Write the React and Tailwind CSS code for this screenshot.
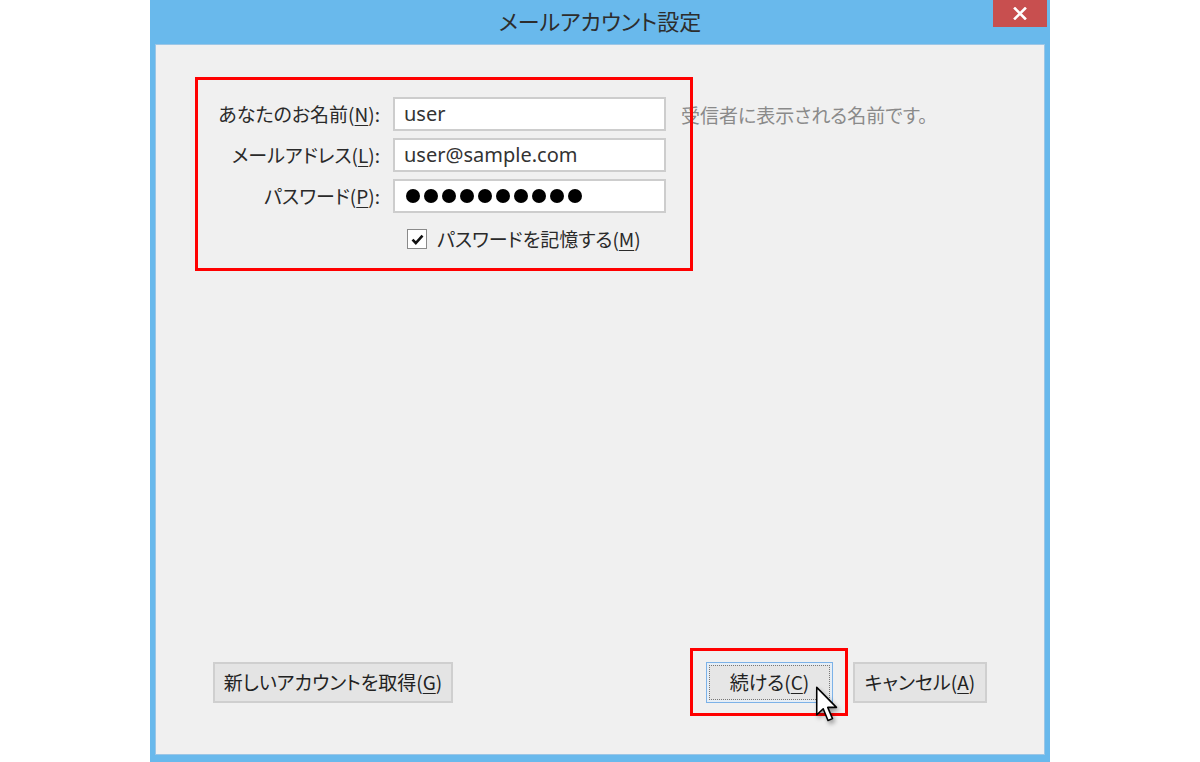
import React from 'react'

const jp = "font-['Noto_Sans_CJK_JP',sans-serif] [font-feature-settings:'palt']"
const latin = "font-['Noto_Sans','Noto_Sans_CJK_JP',sans-serif]"

function Key({ k }) {
  return <span className="underline underline-offset-[3px] decoration-1">{k}</span>
}

function Field({ label, k, children }) {
  return (
    <div className="flex items-center h-[34px]">
      <div className={`w-[182px] text-right text-[19px] text-[#2a2a2a] whitespace-nowrap ${jp}`}>
        {label}(<Key k={k} />):
      </div>
      <div className="ml-[13px] w-[273px] h-full bg-white border-2 border-[#cdcdcd] flex items-center px-[9px]">
        {children}
      </div>
    </div>
  )
}

function Cursor() {
  return (
    <svg width="26" height="38" viewBox="0 0 18 27" className="drop-shadow-[2px_3px_2px_rgba(0,0,0,0.35)]">
      <path d="M1 1 L1 20.5 L5.6 16.2 L9 24.5 L12.2 23.2 L8.8 15.2 L15 15.2 Z" fill="#fff" stroke="#000" strokeWidth="1.1" strokeLinejoin="round" />
    </svg>
  )
}

function Button({ children, focused, className = '' }) {
  return (
    <button
      className={`h-[41px] text-[19px] text-[#222] whitespace-nowrap ${jp} ${
        focused ? 'border border-[#7cb2e8] bg-[#e6eef6] p-[2px]' : 'border-2 border-[#cfcfcf] bg-[#e4e4e4]'
      } ${className}`}
    >
      {focused ? (
        <span className="flex items-center justify-center h-full w-full border border-dotted border-[#777] bg-[#e6e6e6]">
          {children}
        </span>
      ) : (
        children
      )}
    </button>
  )
}

export default function App() {
  return (
    <div className="w-[1200px] h-[762px] bg-white flex justify-center overflow-hidden">
      <div className="w-[900px] h-[762px] bg-[#69b9ec] flex flex-col">
        {/* title bar */}
        <div className="relative h-[44px] flex items-center justify-center shrink-0">
          <span className={`text-[22px] text-[#2d2d2d] pb-[4px] ${jp}`}>メールアカウント設定</span>
          <div className="absolute right-[3px] top-0 w-[54px] h-[27px] bg-[#c84f4f] flex items-center justify-center">
            <svg width="14" height="13" viewBox="0 0 14 13">
              <path d="M2 1.5 L12 11.5 M12 1.5 L2 11.5" stroke="#fff" strokeWidth="2.6" strokeLinecap="square" />
            </svg>
          </div>
        </div>

        {/* content */}
        <div className="relative mx-[5px] mb-[7px] flex-1 bg-[#f0f0f0] border border-[#9cc6e6] flex flex-col">
          <div className="flex pt-[52px] pl-[42px]">
            <div className="flex flex-col gap-[7px]">
              <Field label="あなたのお名前" k="N">
                <span className={`text-[20px] text-[#333] ${latin}`}>user</span>
              </Field>
              <Field label="メールアドレス" k="L">
                <span className={`text-[20px] text-[#333] ${latin}`}>user@sample.com</span>
              </Field>
              <Field label="パスワード" k="P">
                <div className="flex gap-[4px] pl-[2px]">
                  {Array.from({ length: 10 }).map((_, i) => (
                    <span key={i} className="w-[14px] h-[14px] rounded-full bg-black" />
                  ))}
                </div>
              </Field>
              <div className="flex items-center mt-[5px] ml-[209px]">
                <span className="w-[20px] h-[20px] bg-white border border-[#8a8a8a] flex items-center justify-center">
                  <svg width="13" height="11" viewBox="0 0 13 11">
                    <path d="M1.5 5.6 L4.8 9 L11.5 1.6" stroke="#111" strokeWidth="2.6" fill="none" />
                  </svg>
                </span>
                <span className={`ml-[10px] text-[19px] text-[#2a2a2a] ${jp}`}>
                  パスワードを記憶する(<Key k="M" />)
                </span>
              </div>
            </div>
            <div className={`ml-[15px] mt-[4px] text-[19px] text-[#8a8a8a] whitespace-nowrap ${jp}`}>受信者に表示される名前です。</div>
          </div>

          <div className="flex-1" />

          <div className="flex items-center px-[57px] pb-[51px]">
            <Button className="w-[240px]">
              新しいアカウントを取得(<Key k="G" />)
            </Button>
            <div className="flex-1" />
            <Button focused className="w-[127px]">
              続ける(<Key k="C" />)
            </Button>
            <Button className="ml-[20px] w-[134px]">
              キャンセル(<Key k="A" />)
            </Button>
          </div>

          {/* annotations */}
          <div className="absolute left-[39px] top-[32px] w-[498px] h-[194px] border-[3px] border-[#ff0000]" />
          <div className="absolute left-[534px] top-[603px] w-[158px] h-[68px] border-[3px] border-[#ff0000]" />
          <div className="absolute left-[659px] top-[641px]">
            <Cursor />
          </div>
        </div>
      </div>
    </div>
  )
}
